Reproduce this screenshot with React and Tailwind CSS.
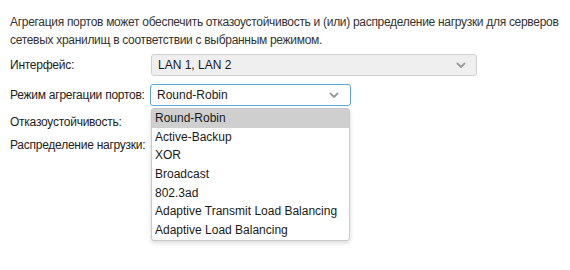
import React from "react";

const Chevron = ({ color = "#8a8a8a" }) => (
  <svg width="10" height="7" viewBox="0 0 10 7" fill="none">
    <path d="M1.5 1.5 L5 5 L8.5 1.5" stroke={color} strokeWidth="1.8" strokeLinecap="round" strokeLinejoin="round" />
  </svg>
);

const items = [
  "Round-Robin",
  "Active-Backup",
  "XOR",
  "Broadcast",
  "802.3ad",
  "Adaptive Transmit Load Balancing",
  "Adaptive Load Balancing",
];

export default function App() {
  return (
    <div
      className="w-[570px] h-[270px] bg-white text-[12px] text-[#222] relative overflow-hidden whitespace-nowrap"
      style={{ fontFamily: '"Liberation Sans", Arial, sans-serif' }}
    >
      <div className="pl-[10px] pt-[13px]">
        <p className="leading-[18px] text-[#333] tracking-[-0.3px]">
          Агрегация портов может обеспечить отказоустойчивость и (или) распределение нагрузки для серверов
          <br />
          сетевых хранилищ в соответствии с выбранным режимом.
        </p>
        <div className="flex items-center mt-[5px] h-[22px]">
          <div className="w-[141px] tracking-[-0.25px]">Интерфейс:</div>
          <div className="w-[326px] h-[22px] rounded-[3px] border border-[#d0d0d0] bg-[#efefef] flex items-center justify-between pl-[6px] pr-[10px] text-[#1a1a1a]">
            <span>LAN 1, LAN 2</span>
            <Chevron color="#999" />
          </div>
        </div>
        <div className="flex items-center mt-[8px] h-[22px]">
          <div className="w-[140px] tracking-[-0.25px]">Режим агрегации портов:</div>
          <div className="relative">
            <div className="w-[201px] h-[22px] rounded-[3px] border border-[#5aa7d6] bg-white flex items-center justify-between pl-[6px] pr-[11px] text-[#1a1a1a]">
              <span>Round-Robin</span>
              <Chevron color="#999" />
            </div>
            <div className="absolute left-[1px] top-[24px] w-[199px] bg-white border border-[#c8c8c8] rounded-[3px] shadow-[0_2px_4px_rgba(0,0,0,0.15)] text-[#1a1a1a] z-10">
              {items.map((it, i) => (
                <div
                  key={it}
                  className={
                    "h-[18.7px] leading-[18.7px] pl-[3px] " +
                    (i === 0 ? "bg-[#cfcfcf]" : "")
                  }
                >
                  {it}
                </div>
              ))}
            </div>
          </div>
        </div>
        <div className="mt-[7px] leading-[18px] tracking-[-0.25px]">Отказоустойчивость:</div>
        <div className="mt-[5px] leading-[18px] tracking-[-0.25px]">Распределение нагрузки:</div>
      </div>
    </div>
  );
}
